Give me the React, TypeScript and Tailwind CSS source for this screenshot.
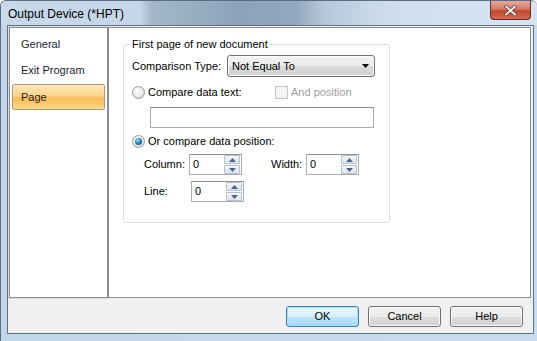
import React from 'react';

const font = "font-['Liberation_Sans',Arial,sans-serif]";

const Radio: React.FC<{ checked?: boolean }> = ({ checked }) => (
  <span className="flex h-[13px] w-[13px] shrink-0 items-center justify-center rounded-full border border-[#9a9a9a] bg-[radial-gradient(circle_at_40%_35%,#ffffff_0%,#e8e8e8_55%,#cdcdcd_100%)]">
    {checked && (
      <span className="h-[7px] w-[7px] rounded-full bg-[radial-gradient(circle_at_40%_35%,#a8e6ff_0%,#1c86c9_45%,#0b3c6e_100%)]" />
    )}
  </span>
);

const SpinButton: React.FC<{ up?: boolean }> = ({ up }) => (
  <div className="flex h-[9px] items-center justify-center rounded-[1px] border border-[#b7c0cc] bg-[linear-gradient(#f4f6f9,#dfe5ed)]">
    <svg width="7" height="4" viewBox="0 0 7 4">
      {up ? <path d="M0 4 L3.5 0 L7 4 Z" fill="#4a6390" /> : <path d="M0 0 L7 0 L3.5 4 Z" fill="#4a6390" />}
    </svg>
  </div>
);

const Spin: React.FC<{ value: string }> = ({ value }) => (
  <div className="flex h-[21px] w-[53px] border border-[#abadb3] border-t-[#8e9196] bg-white">
    <span className="flex-1 pl-[3px] text-[11px] leading-[19px] text-black">{value}</span>
    <div className="flex w-[17px] flex-col justify-center gap-px pr-px">
      <SpinButton up />
      <SpinButton />
    </div>
  </div>
);

const DialogButton: React.FC<{ label: string; primary?: boolean }> = ({ label, primary }) => (
  <button
    className={
      primary
        ? 'h-[21px] w-[73px] rounded-[3px] border border-[#3c7fb1] bg-[linear-gradient(#eaf6fd_0%,#d9f0fc_50%,#bee6fd_51%,#a7d9f5_100%)] text-[11px] text-black shadow-[inset_0_0_0_1px_#a6e3fd]'
        : 'h-[21px] w-[73px] rounded-[3px] border border-[#707070] bg-[linear-gradient(#f2f2f2_0%,#ebebeb_50%,#dddddd_51%,#cfcfcf_100%)] text-[11px] text-black shadow-[inset_0_0_0_1px_#fbfbfb]'
    }
  >
    {label}
  </button>
);

export default function App() {
  return (
    <div
      className={`${font} flex h-[341px] w-[537px] flex-col overflow-hidden rounded-t-[6px] border-l border-t border-[#5b6d80] bg-[linear-gradient(90deg,#c2d6eb_0%,#c9dbee_100%)]`}
    >
      {/* Title bar */}
      <div className="flex h-[24px] shrink-0 items-start bg-[linear-gradient(90deg,#c8d9ea_0%,#c5d6e8_26%,#a3b7cb_28%,#8da2b9_45%,#93a8be_55%,#b4c7da_60%,#cfdeee_72%,#d6e4f2_100%)]">
        <span className="mt-[6px] pl-[7px] text-[12px] leading-[14px] text-black">Output Device (*HPT)</span>
        <div className="ml-auto mr-[6px] flex h-[19px] w-[41px] items-center justify-center rounded-b-[4px] border border-t-0 border-[#6b2b22] bg-[linear-gradient(#e9a99b_0%,#d47a66_45%,#c0462c_55%,#d46a4f_100%)]">
          <svg width="13" height="11" viewBox="0 0 13 11">
            <path d="M2 1.5 L11 9.5 M11 1.5 L2 9.5" stroke="#6a3a32" strokeWidth="3.4" strokeLinecap="square" />
            <path d="M2 1.5 L11 9.5 M11 1.5 L2 9.5" stroke="#f4f4f4" strokeWidth="1.8" strokeLinecap="square" />
          </svg>
        </div>
      </div>

      {/* Client area */}
      <div className="ml-[6px] mr-[3px] flex h-[309px] shrink-0 flex-col border border-[#5f7387] bg-[#f0f0f0]">
        <div className="ml-px mr-[2px] mt-px flex h-[271px]">
          {/* Left navigation */}
          <div className="flex w-[99px] flex-col border border-[#8c8c8c] bg-white pt-[3px] outline outline-1 outline-[#dcdcdc]">
            <div className="flex h-[26px] items-center pl-[11px] text-[11px] text-[#1b1b2e]">General</div>
            <div className="flex h-[27px] items-center pl-[11px] text-[11px] text-[#1b1b2e]">Exit Program</div>
            <div className="mx-[2px] flex h-[26px] items-center rounded-[2px] border border-[#b39a72] bg-[linear-gradient(#fde9bd_0%,#fbd38a_45%,#f8bd55_55%,#fbd68a_100%)] pl-[8px] text-[11px] text-[#1b1b2e]">
              Page
            </div>
          </div>

          {/* Right content */}
          <div className="flex-1 border border-[#8c8c8c] bg-white">
            <fieldset className="ml-[14px] mt-[10px] h-[185px] w-[267px] rounded-[3px] border border-[#d5dfe5] pl-[8px]">
              <legend className="-ml-[2px] px-[2px] text-[11px] leading-[13px] text-black">First page of new document</legend>

              <div className="mt-[4px] flex h-[22px] items-center">
                <span className="w-[95px] text-[11px] text-black">Comparison Type:</span>
                <div className="flex h-[22px] w-[148px] items-center justify-between rounded-[3px] border border-[#707070] bg-[linear-gradient(#f2f2f2_0%,#ebebeb_50%,#dddddd_51%,#cfcfcf_100%)] pl-[4px] pr-[5px] shadow-[inset_0_0_0_1px_#fbfbfb]">
                  <span className="text-[11px] text-black">Not Equal To</span>
                  <svg width="7" height="4" viewBox="0 0 7 4">
                    <path d="M0 0 L7 0 L3.5 4 Z" fill="#000" />
                  </svg>
                </div>
              </div>

              <div className="mt-[9px] flex h-[13px] items-center">
                <Radio />
                <span className="ml-[3px] w-[127px] text-[11px] text-black">Compare data text:</span>
                <span className="h-[13px] w-[13px] border border-[#c4c4c4] bg-[#f4f4f4]" />
                <span className="ml-[3px] text-[11px] text-[#a0a0a0]">And position</span>
              </div>

              <div className="ml-[18px] mt-[8px] h-[21px] w-[224px] border border-[#abadb3] border-t-[#8e9196] bg-white" />

              <div className="mt-[7px] flex h-[13px] items-center">
                <Radio checked />
                <span className="ml-[3px] text-[11px] text-black">Or compare data position:</span>
              </div>

              <div className="mt-[6px] flex h-[21px] items-center pl-[12px]">
                <span className="w-[45px] text-[11px] text-black">Column:</span>
                <Spin value="0" />
                <span className="ml-[29px] w-[35px] text-[11px] text-black">Width:</span>
                <Spin value="0" />
              </div>

              <div className="mt-[6px] flex h-[21px] items-center pl-[12px]">
                <span className="w-[47px] text-[11px] text-black">Line:</span>
                <Spin value="0" />
              </div>
            </fieldset>
          </div>
        </div>

        <div className="mr-[10px] mt-[8px] flex justify-end gap-[9px]">
          <DialogButton label="OK" primary />
          <DialogButton label="Cancel" />
          <DialogButton label="Help" />
        </div>
      </div>
    </div>
  );
}
